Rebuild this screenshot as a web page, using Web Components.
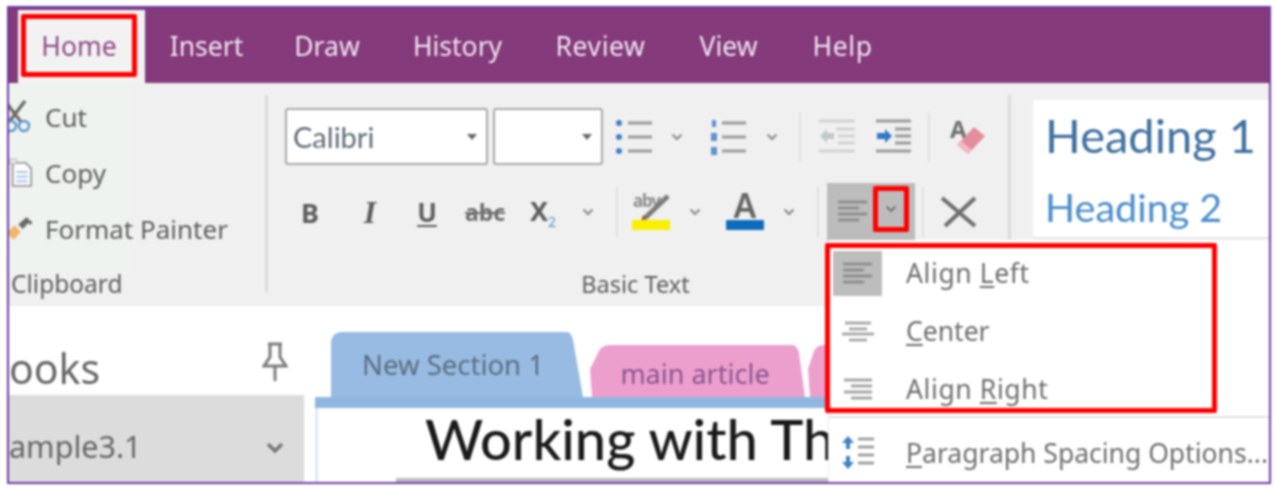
<!DOCTYPE html>
<html lang="en">
<head>
<meta charset="utf-8">
<title>OneNote ribbon</title>
<style>
  html, body { margin: 0; padding: 0; background: #fff; }
  body { font-family: "Noto Sans", sans-serif; width: 1276px; height: 488px; overflow: hidden; }
</style>
</head>
<body>
<app-frame>
  <ribbon-tabs></ribbon-tabs>
  <ribbon-bar>
    <clipboard-group></clipboard-group>
    <basic-text-group></basic-text-group>
    <styles-gallery></styles-gallery>
  </ribbon-bar>
  <work-area>
    <notebook-nav></notebook-nav>
    <note-page></note-page>
  </work-area>
  <align-menu slot="overlay"></align-menu>
</app-frame>

<script>
const chev = (c = '#8c8c8c') => `<svg width="12" height="8" viewBox="0 0 12 8"><path d="M1.5 1.5 6 6l4.5-4.5" fill="none" stroke="${c}" stroke-width="2.2"/></svg>`;
const caret = `<svg width="10" height="6" viewBox="0 0 10 6"><path d="M0 0h10L5 6z" fill="#666"/></svg>`;
const lines = (rows, stroke = '#8a8a8a', w = 2) => rows.map(r => `<path d="M${r[0]} ${r[2]}H${r[1]}" stroke="${stroke}" stroke-width="${w}"/>`).join('');

const icons = {
  bullets: `<svg width="38" height="38" viewBox="0 0 38 38">
    <g fill="#3f7fc4"><circle cx="4" cy="5" r="3"/><circle cx="4" cy="19" r="3"/><circle cx="4" cy="33" r="3"/></g>
    ${lines([[13, 37, 5], [13, 37, 19], [13, 37, 33]], '#9a9a9a', 3)}</svg>`,
  numbers: `<svg width="36" height="38" viewBox="0 0 36 38">
    <g fill="#5b93cf"><rect x="2" y="2" width="4" height="7"/><rect x="1" y="15" width="6" height="8"/><rect x="1" y="29" width="6" height="8"/></g>
    ${lines([[12, 36, 5], [12, 36, 19], [12, 36, 33]], '#9a9a9a', 3)}</svg>`,
  outdent: `<svg width="38" height="36" viewBox="0 0 38 36">
    ${lines([[1, 37, 2], [1, 37, 32], [18, 37, 10], [20, 37, 17], [20, 37, 24]], '#d2d2d2', 3)}
    <path d="M2 17l7-7v4h7v6H9v4z" fill="#c3c8c9"/></svg>`,
  indent: `<svg width="36" height="36" viewBox="0 0 36 36">
    ${lines([[0, 35, 2], [0, 35, 32], [19, 35, 10], [19, 35, 17], [19, 35, 24]], '#9a9a9a', 3)}
    <path d="M16 17l-7-7v4H1v6h8v4z" fill="#2f78c4"/></svg>`,
  clear: `<svg width="38" height="40" viewBox="0 0 38 40" overflow="visible">
    <text x="2" y="21" font-family="Noto Sans" font-size="24" font-weight="700" fill="#707070">A</text>
    <path d="M9 28 26 10l11 9-17 18z" fill="#e38d9e"/><path d="M9 28l11 9 4-4-11-9z" fill="#f3b8c4"/></svg>`,
  highlight: `<svg width="42" height="42" viewBox="0 0 42 42" overflow="visible">
    <text x="3" y="16" font-family="Noto Sans" font-size="17" font-weight="700" fill="#8d8d8d" textLength="28">aby</text>
    <path d="M15 27 38 5" stroke="#7b7b7b" stroke-width="5"/><path d="M11 30l2-6 4 4z" fill="#a05a2a"/>
    <rect x="2" y="29" width="38" height="10" rx="1" fill="#f8f000"/></svg>`,
  fontcolor: `<svg width="42" height="42" viewBox="0 0 42 42" overflow="visible">
    <text x="21" y="27" text-anchor="middle" font-family="Noto Sans" font-size="34" font-weight="600" fill="#666">A</text>
    <rect x="2" y="29" width="38" height="10" rx="1" fill="#0f6cbd"/></svg>`,
  alignLeft: `<svg width="29" height="22" viewBox="0 0 29 22">
    ${lines([[0, 29, 2], [0, 21, 8], [0, 29, 14], [0, 21, 20]], '#8b8b8b', 2.8)}</svg>`,
  alignCenter: `<svg width="32" height="21" viewBox="0 0 32 21">
    ${lines([[3, 29, 2], [7, 25, 8], [0, 32, 13], [7, 25, 19]], '#a0a0a0', 2.6)}</svg>`,
  alignRight: `<svg width="29" height="22" viewBox="0 0 29 22">
    ${lines([[1, 29, 2], [8, 29, 8], [1, 29, 14], [8, 29, 20]], '#a0a0a0', 2.8)}</svg>`,
  spacing: `<svg width="34" height="34" viewBox="0 0 34 34">
    <path d="M7 0l6 7H9v6H5V7H1z" fill="#3f7fc4"/><path d="M7 33l6-7H9v-6H5v6H1z" fill="#3f7fc4"/>
    ${lines([[17, 33, 3], [17, 33, 11], [17, 33, 19], [17, 33, 27]], '#9a9a9a', 2.8)}</svg>`,
  cross: `<svg width="41" height="34" viewBox="0 0 41 34"><path d="M4 3l33 28M37 3 7 31" fill="none" stroke="#6f6f6f" stroke-width="4"/></svg>`,
  scissors: `<svg width="24" height="36" viewBox="0 0 24 36">
    <path d="M-4 2 12 23M16 2 0 23" stroke="#6c6c6c" stroke-width="3.4" fill="none"/>
    <circle cx="15" cy="27" r="5" fill="none" stroke="#5b93cf" stroke-width="2.4"/><circle cx="2" cy="27" r="5" fill="none" stroke="#5b93cf" stroke-width="2.4"/></svg>`,
  copy: `<svg width="26" height="32" viewBox="0 0 26 32">
    <path d="M4 5h14l6 6v19H4z" fill="#fdfdfd" stroke="#9a9a9a" stroke-width="2"/>
    <path d="M1 1h7v5H1z" fill="#eee" stroke="#aaa"/>
    ${lines([[8, 20, 15], [8, 20, 20], [8, 20, 25]], '#9fc0e4', 2)}</svg>`,
  painter: `<svg width="26" height="30" viewBox="0 0 26 30">
    <path d="M-2 19 6 11l7 7-8 9z" fill="#efb868"/><path d="M10 10l9-8 4 4-8 9z" fill="#6a6a6a"/>
    <circle cx="23" cy="8" r="2" fill="#666"/></svg>`,
  pin: `<svg width="26" height="40" viewBox="0 0 26 40">
    <path d="M6 2h14M8 2v13L2 24h22l-6-9V2M13 24v15" fill="none" stroke="#7d7d7d" stroke-width="3"/></svg>`
};

class AppFrame extends HTMLElement {
  connectedCallback() {
    this.attachShadow({ mode: 'open' });
    this.shadowRoot.innerHTML = `
      <style>
        :host { display: block; margin: 6px 0 0 7px; width: 1264px; height: 478px; box-sizing: border-box;
                border: 2px solid #6c38a8; position: relative; overflow: hidden; background: #fff; filter: blur(.9px); }
      </style>
      <slot></slot><slot name="overlay"></slot>`;
  }
}

class RibbonTabs extends HTMLElement {
  connectedCallback() {
    this.attachShadow({ mode: 'open' });
    this.shadowRoot.innerHTML = `
      <style>
        :host { display: flex; height: 75px; background: #843a7b; align-items: stretch; color: #f1e6ef; font-size: 26.5px; }
        .home { margin: 2px 0 0 9px; width: 127px; box-sizing: border-box; background: #f2f2f2; color: #8f4a87; display: flex; }
        .home span { margin: 4px 8px 6px 3px; flex: 1; border: 5px solid #f00; border-radius: 2px; display: flex; align-items: center; justify-content: center; }
        .rest { display: flex; gap: 54px; margin-left: 27px; align-items: center; }
        .rest span { display: flex; justify-content: center; white-space: nowrap; }
      </style>
      <div class="home"><span>Home</span></div>
      <div class="rest">
        <span style="width:69px">Insert</span>
        <span style="width:64px">Draw</span>
        <span style="width:89px">History</span>
        <span style="width:89px;letter-spacing:.6px">Review</span>
        <span style="width:59px">View</span>
        <span style="width:61px;letter-spacing:.6px">Help</span>
      </div>`;
  }
}

class RibbonBar extends HTMLElement {
  connectedCallback() {
    this.attachShadow({ mode: 'open' });
    this.shadowRoot.innerHTML = `
      <style>:host { display: flex; height: 223px; background: #f0f0f0; color: #5e5e5e; font-size: 26px; }</style>
      <slot></slot>`;
  }
}

class ClipboardGroup extends HTMLElement {
  connectedCallback() {
    this.attachShadow({ mode: 'open' });
    this.shadowRoot.innerHTML = `
      <style>
        :host { display: block; width: 259px; box-sizing: border-box; padding-top: 6px; position: relative;
                background: linear-gradient(90deg, #eff3ef 0 119px, transparent 119px); background-size: 100% 190px; background-repeat: no-repeat; }
        :host::after { content: ""; position: absolute; right: 0; top: 12px; width: 3px; height: 197px; background: #dcdcdc; }
        .row { height: 56px; display: flex; align-items: center; gap: 12px; }
        .ic { width: 24px; display: flex; justify-content: flex-start; }
        .label { margin: 10px 0 0 2px; font-size: 24.5px; line-height: 34px; }
      </style>
      <div class="row"><span class="ic">${icons.scissors}</span><span>Cut</span></div>
      <div class="row"><span class="ic">${icons.copy}</span><span>Copy</span></div>
      <div class="row"><span class="ic">${icons.painter}</span><span>Format Painter</span></div>
      <div class="label">Clipboard</div>`;
  }
}

class BasicTextGroup extends HTMLElement {
  connectedCallback() {
    this.attachShadow({ mode: 'open' });
    const at = (ml, w, html, extra = '') => `<span class="c" style="margin-left:${ml}px;width:${w}px;${extra}">${html}</span>`;
    this.shadowRoot.innerHTML = `
      <style>
        :host { display: block; width: 743px; box-sizing: border-box; padding: 25px 0 0 17px; position: relative; }
        :host::after { content: ""; position: absolute; right: 0; top: 12px; width: 3px; height: 197px; background: #dcdcdc; }
        .row { display: flex; align-items: center; }
        .r1 { height: 57px; }
        .r2 { height: 58px; margin-top: 18px; }
        .c { display: flex; align-items: center; justify-content: center; flex: none; }
        .combo { height: 57px; box-sizing: border-box; background: #fff; border: 2px solid #a8a8a8; border-radius: 3px; display: flex; align-items: center; justify-content: space-between; padding: 0 9px 0 6px; color: #5f6b75; font-family: Lato, sans-serif; font-size: 29px; flex: none; }
        .sep { width: 2px; height: 50px; background: #e0e0e0; flex: none; }
        .b { font-size: 27px; font-weight: 700; color: #5e5e5e; }
        .i { font-family: "Liberation Serif", serif; font-style: italic; font-weight: 700; font-size: 32px; color: #5e5e5e; }
        .u { font-weight: 700; font-size: 26px; color: #5e5e5e; text-decoration: underline; text-underline-offset: 3px; }
        .s { font-weight: 700; font-size: 23px; color: #6e6e6e; text-decoration: line-through; }
        .x { font-weight: 700; font-size: 27px; color: #5e5e5e; }
        .x sub { font-size: 14px; color: #5b93cf; font-weight: 400; }
        .alignbtn { width: 88px; height: 58px; margin-left: 8px; background: #bcbcbc; flex: none; display: flex; box-sizing: border-box; }
        .alignbtn .l { display: flex; margin: 17px 0 0 11px; width: 35px; }
        .alignbtn .rd { width: 36px; height: 46px; margin-top: 3px; box-sizing: border-box; border: 5px solid #f00; border-radius: 2px; display: flex; align-items: center; justify-content: center; }
        .label { text-align: center; margin: 29px 0 0 -25px; font-size: 23.5px; line-height: 28px; }
      </style>
      <div class="row r1">
        <div class="combo" style="width:203px"><span>Calibri</span>${caret}</div>
        <div class="combo" style="width:110px;margin-left:5px;justify-content:flex-end">${caret}</div>
        ${at(12, 38, icons.bullets)}${at(18, 12, chev())}
        ${at(27, 36, icons.numbers)}${at(20, 12, chev())}
        <span class="sep" style="margin-left:21px"></span>
        ${at(17, 38, icons.outdent)}${at(20, 36, icons.indent)}
        <span class="sep" style="margin-left:16px"></span>
        ${at(18, 38, icons.clear)}
      </div>
      <div class="row r2">
        ${at(10, 30, '<span class="b">B</span>')}
        ${at(30, 30, '<span class="i">I</span>')}
        ${at(27, 30, '<span class="u">U</span>')}
        ${at(23, 40, '<span class="s">abc</span>')}
        ${at(23, 30, '<span class="x">X<sub>2</sub></span>')}
        ${at(24, 12, chev())}
        <span class="sep" style="margin-left:22px"></span>
        ${at(12, 42, icons.highlight)}${at(17, 12, chev())}
        ${at(23, 42, icons.fontcolor)}${at(17, 12, chev())}
        <span class="sep" style="margin-left:22px"></span>
        <div class="alignbtn"><span class="l">${icons.alignLeft}</span><span class="rd">${chev('#777')}</span></div>
        <span class="sep" style="margin-left:7px"></span>
        ${at(14, 41, icons.cross)}
      </div>
      <div class="label">Basic Text</div>`;
  }
}

class StylesGallery extends HTMLElement {
  connectedCallback() {
    this.attachShadow({ mode: 'open' });
    this.shadowRoot.innerHTML = `
      <style>
        :host { display: block; flex: 1; margin: 17px 0 0 22px; height: 139px; background: #fff; box-sizing: border-box; padding-left: 12px; font-family: Lato, sans-serif; overflow: hidden; border-bottom: 2px solid #e6e6e6; }
        .h1 { font-size: 47px; line-height: 71px; color: #3f709f; white-space: nowrap; }
        .h2 { font-size: 39.5px; line-height: 72px; color: #4a8cca; white-space: nowrap; }
      </style>
      <div class="h1">Heading 1</div>
      <div class="h2">Heading 2</div>`;
  }
}

class WorkArea extends HTMLElement {
  connectedCallback() {
    this.attachShadow({ mode: 'open' });
    this.shadowRoot.innerHTML = `
      <style>:host { display: flex; height: 176px; background: #fff; overflow: hidden; }</style>
      <slot></slot>`;
  }
}

class NotebookNav extends HTMLElement {
  connectedCallback() {
    this.attachShadow({ mode: 'open' });
    this.shadowRoot.innerHTML = `
      <style>
        :host { display: block; width: 295px; flex: none; color: #666; }
        .head { height: 89px; display: flex; justify-content: space-between; align-items: flex-start; }
        .t { font-size: 41px; line-height: 50px; margin-top: 37px; }
        .p { margin: 36px 16px 0 0; }
        .row { height: 87px; background: #dcdcdc; display: flex; justify-content: space-between; padding-top: 27px; box-sizing: border-box; }
        .n { font-size: 30.5px; line-height: 48px; }
        .c { margin: 15px 20px 0 0; }
      </style>
      <div class="head"><span class="t">ooks</span><span class="p">${icons.pin}</span></div>
      <div class="row"><span class="n">ample3.1</span><span class="c"><svg width="18" height="12" viewBox="0 0 18 12"><path d="M2 2l7 7 7-7" fill="none" stroke="#777" stroke-width="3.4"/></svg></span></div>`;
  }
}

class NotePage extends HTMLElement {
  connectedCallback() {
    this.attachShadow({ mode: 'open' });
    this.shadowRoot.innerHTML = `
      <style>
        :host { display: block; flex: 1; margin-left: 11px; overflow: hidden; }
        .tabs { display: flex; align-items: flex-end; height: 91px; padding-left: 16px; }
        .tab { flex: none; display: flex; justify-content: center; }
        .blue { width: 252px; height: 65px; background: #97bbe2; color: #5c6d80; line-height: 66px; font-size: 27.5px; padding-right: 8px; box-sizing: border-box;
                clip-path: path('M0 65V12Q0 0 12 0H236Q240 0 242 8L252 65Z'); }
        .pink { width: 215px; height: 52px; margin-left: 7px; background: #ec9fcd; color: #8a5590; line-height: 58px; font-size: 27px; padding-right: 5px; box-sizing: border-box;
                clip-path: path('M2 52L0 24 8 8Q11 0 20 0H202Q207 0 209 8L215 52Z'); }
        .pink2 { width: 24px; height: 52px; margin-left: 3px; background: #ec9fcd; clip-path: path('M2 52L0 24 6 6Q9 0 16 0H24V52Z'); }
        .band { height: 11px; background: #90b7e0; }
        .page { height: 74px; border-left: 3px solid #dde8f5; padding-left: 107px; position: relative; box-sizing: border-box; }
        .title { font-family: Lato, sans-serif; font-size: 56px; line-height: 62px; color: #1a1a1a; white-space: nowrap; font-weight: 500; }
        .rule { position: absolute; left: 78px; right: 0; bottom: 0; height: 4px; background: #bdbdbd; }
      </style>
      <div class="tabs">
        <div class="tab blue">New Section 1</div>
        <div class="tab pink">main article</div>
        <div class="tab pink2"></div>
      </div>
      <div class="band"></div>
      <div class="page"><div class="title">Working with Th</div><div class="rule"></div></div>`;
  }
}

class AlignMenu extends HTMLElement {
  connectedCallback() {
    this.attachShadow({ mode: 'open' });
    const row = (icon, label, key, rest, cls = '') => `
      <div class="row ${cls}"><span class="ic">${icon}</span><span class="txt">${label}<u>${key}</u>${rest}</span></div>`;
    this.shadowRoot.innerHTML = `
      <style>
        :host { display: block; position: absolute; left: 819px; top: 232px; right: 0; bottom: 0; background: #fff; padding-top: 4px; color: #6e6e6e; font-size: 26.5px; border-left: 1px solid #ececec; box-sizing: border-box; }
        .row { height: 58px; display: flex; align-items: center; }
        .ic { width: 49px; height: 45px; margin-left: 4px; display: flex; align-items: center; justify-content: center; flex: none; }
        .sel .ic { background: #bdbdbd; }
        .txt { margin-left: 24px; white-space: nowrap; }
        .wide .txt { letter-spacing: .6px; }
        u { text-underline-offset: 3px; }
        hr { margin: -2px 0 0; border: 0; height: 2px; background: #e2e2e2; }
        .last { height: 70px; }
        .red { position: absolute; left: -4px; top: 3px; width: 392px; height: 170px; box-sizing: border-box; border: 5px solid #f00; border-radius: 2px; }
      </style>
      ${row(icons.alignLeft, 'Align ', 'L', 'eft', 'sel wide')}
      ${row(icons.alignCenter, '', 'C', 'enter')}
      ${row(icons.alignRight, 'Align ', 'R', 'ight', 'wide')}
      <hr>
      ${row(icons.spacing, '', 'P', 'aragraph Spacing Options...', 'last')}
      <div class="red"></div>`;
  }
}

customElements.define('app-frame', AppFrame);
customElements.define('ribbon-tabs', RibbonTabs);
customElements.define('ribbon-bar', RibbonBar);
customElements.define('clipboard-group', ClipboardGroup);
customElements.define('basic-text-group', BasicTextGroup);
customElements.define('styles-gallery', StylesGallery);
customElements.define('work-area', WorkArea);
customElements.define('notebook-nav', NotebookNav);
customElements.define('note-page', NotePage);
customElements.define('align-menu', AlignMenu);
</script>
</body>
</html>
